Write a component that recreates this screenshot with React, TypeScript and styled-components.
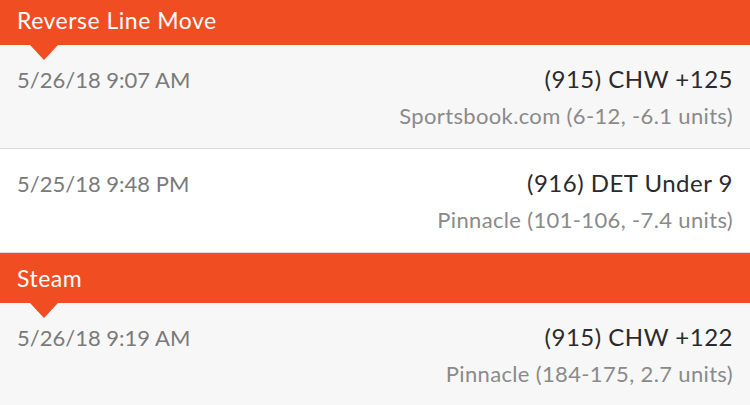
import styled, { createGlobalStyle } from "styled-components";

const alerts = [
  {
    kind: "Reverse Line Move",
    rows: [
      {
        time: "5/26/18 9:07 AM",
        pick: "(915) CHW +125",
        book: "Sportsbook.com (6-12, -6.1 units)",
        shaded: true,
      },
      {
        time: "5/25/18 9:48 PM",
        pick: "(916) DET Under 9",
        book: "Pinnacle (101-106, -7.4 units)",
        shaded: false,
      },
    ],
  },
  {
    kind: "Steam",
    rows: [
      {
        time: "5/26/18 9:19 AM",
        pick: "(915) CHW +122",
        book: "Pinnacle (184-175, 2.7 units)",
        shaded: true,
      },
    ],
  },
];

function App() {
  return (
    <>
      <GlobalStyle />
      <List>
        {alerts.map((group) => (
          <section key={group.kind}>
            <Header>{group.kind}</Header>
            {group.rows.map((row, i) => (
              <Row key={row.time} $shaded={row.shaded} $first={i === 0}>
                <Time>{row.time}</Time>
                <Details>
                  <Pick>{row.pick}</Pick>
                  <Book>{row.book}</Book>
                </Details>
              </Row>
            ))}
          </section>
        ))}
      </List>
    </>
  );
}

const GlobalStyle = createGlobalStyle`
  html, body {
    margin: 0;
    padding: 0;
    background: #ffffff;
    overflow: hidden;
  }
  body {
    font-family: Lato, "Open Sans", sans-serif;
  }
`;

const List = styled.div`
  display: flex;
  flex-direction: column;
  margin-top: -5px;
`;

const Header = styled.div`
  height: 50px;
  display: flex;
  align-items: center;
  padding: 0 17px;
  background: #f04d22;
  color: #ffffff;
  font-size: 23px;
  letter-spacing: 0.5px;
`;

const Row = styled.div<{ $shaded: boolean; $first: boolean }>`
  position: relative;
  display: flex;
  justify-content: space-between;
  align-items: flex-start;
  height: 104px;
  box-sizing: border-box;
  padding: 19px 17px 0;
  background: ${(p) => (p.$shaded ? "#f7f7f7" : "#ffffff")};
  border-bottom: 1px solid #dddddd;

  ${(p) =>
    p.$first &&
    `
    &::before {
      content: "";
      position: absolute;
      top: 0;
      left: 30px;
      border-left: 14px solid transparent;
      border-right: 14px solid transparent;
      border-top: 15px solid #f04d22;
    }
  `}
`;

const Time = styled.div`
  color: #7a7a7a;
  font-size: 22px;
  padding-top: 2px;
`;

const Details = styled.div`
  display: flex;
  flex-direction: column;
  align-items: flex-end;
  gap: 9px;
`;

const Pick = styled.div`
  color: #2b2b2b;
  font-size: 24px;
  letter-spacing: 0.5px;
`;

const Book = styled.div`
  color: #8a8a8a;
  font-size: 22px;
  letter-spacing: 0.35px;
`;

export default App;
